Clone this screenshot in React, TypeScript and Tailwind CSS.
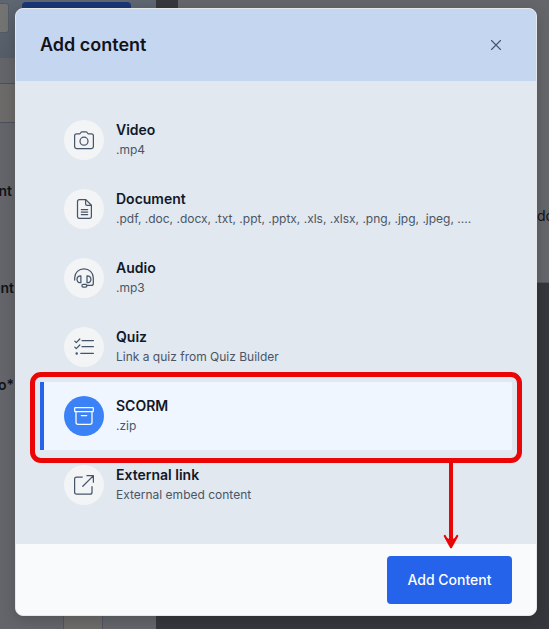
import type { ReactNode } from "react";

type ContentType = {
  title: string;
  description: string;
  icon: ReactNode;
};

const CONTENT_TYPES: ContentType[] = [
  {
    title: "Video",
    description: ".mp4",
    icon: (
      <>
        <path d="M2.600 3.800h3c.7 0 .8-.3 1-.9.2-.7.6-1.100 1.300-1.100h4.200c.7 0 1.100.4 1.300 1.100.2.6.3.9 1 .9h3c1.200 0 2 .8 2 2v10.800c0 1.200-.8 2-2 2H2.600c-1.200 0-2-.8-2-2V5.800c0-1.200.8-2 2-2Z" />
        <circle cx="10" cy="11.200" r="4" />
      </>
    ),
  },
  {
    title: "Document",
    description:
      ".pdf, .doc, .docx, .txt, .ppt, .pptx, .xls, .xlsx, .png, .jpg, .jpeg, ....",
    icon: (
      <>
        <path d="M5.500.6h6.300l5.600 5.600v11.200a2 2 0 0 1-2 2H5.500a2 2 0 0 1-2-2V2.600a2 2 0 0 1 2-2Z" />
        <path d="M11.600.8v4c0 1 .6 1.600 1.600 1.600h4M7.300 10.500h6.400M7.300 13h6.400M7.300 15.500h6.400" />
      </>
    ),
  },
  {
    title: "Audio",
    description: ".mp3",
    icon: (
      <>
        <path d="M.7 12V9.800C.7 4.600 4.800.9 10 .9s9.300 3.700 9.300 8.900v5.600c0 1.300-.7 2-1.900 2h-4.200" />
        <path d="M6.900 7.900v6.800c-2.400.2-3.900-1.100-3.900-3.400s1.500-3.600 3.900-3.400ZM13 7.900v6.800c2.400.2 3.900-1.100 3.900-3.400S15.400 7.700 13 7.900Z" />
        <rect x="7.900" y="16.300" width="5" height="2.700" rx="1.350" />
      </>
    ),
  },
  {
    title: "Quiz",
    description: "Link a quiz from Quiz Builder",
    icon: (
      <>
        <path d="m.8 4.100 1.500 1.500L5.800 2M.8 10.100l1.500 1.500L5.800 8M8 3.600h11.400M8 9.700h11.400M6.800 16.400h12.600" />
        <circle cx="2.700" cy="16.400" r=".6" fill="currentColor" />
      </>
    ),
  },
  {
    title: "SCORM",
    description: ".zip",
    icon: (
      <>
        <rect x=".7" y="1.500" width="18.600" height="4" rx=".6" />
        <path d="M2 5.500v10.800a2 2 0 0 0 2 2h12a2 2 0 0 0 2-2V5.500M7.300 9.500h5.400" />
      </>
    ),
  },
  {
    title: "External link",
    description: "External embed content",
    icon: (
      <>
        <path d="M8.300 2H2.600c-1.200 0-2 .8-2 2v13.200c0 1.200.8 2 2 2h13.400c1.200 0 2-.8 2-2v-5.500" />
        <path d="M12.900.7h6.500v6.500M19.200.9 8.800 11.300" />
      </>
    ),
  },
];

function PageBehind() {
  return (
    <div
      aria-hidden="true"
      className="flex h-full text-[14px] leading-5 font-semibold text-[#111318]"
    >
      <div className="flex h-full w-[156px] shrink-0 flex-col bg-[#64656a]">
        <div className="flex h-[58px] bg-linear-to-b from-[#5d6671] to-[#555d68]">
          <div className="mt-[3px] h-[30px] w-[9px] rounded-r-[3px] border border-l-0 border-[#555b63] bg-[#737373]" />
          <div className="mt-[2px] ml-[13px] h-10 w-[109px] rounded bg-[#1a3674]" />
        </div>
        <div className="mt-[25px] h-10 border-y border-[#4a515b] bg-[#6c6b6a]" />
        <div className="mt-[58px] flex w-3 justify-end whitespace-nowrap">ent</div>
        <div className="mt-[77px] flex w-[14px] justify-end whitespace-nowrap">ent</div>
        <div className="mt-[77px] flex w-[14px] justify-end whitespace-nowrap">o*</div>
        <div className="mt-auto flex h-[95px]">
          <div className="w-[63px]" />
          <div className="w-10 border-x border-[#50565f] bg-[#6c6b6a]" />
        </div>
      </div>
      <div className="w-[22px] shrink-0 bg-[#36373c]" />
      <div className="flex-1 bg-[#36373c]">
        <div className="flex h-[283px] justify-end overflow-hidden border-b border-[#4e565f] bg-[#65666a] pt-[206px]">
          <span className="w-3 font-normal whitespace-nowrap">do</span>
        </div>
      </div>
    </div>
  );
}

function ContentRow({ item, selected }: { item: ContentType; selected: boolean }) {
  return (
    <button
      type="button"
      className={`flex h-[68px] w-full items-center border-l-4 pl-5 text-left ${
        selected ? "border-[#2563eb] bg-[#eff6ff]" : "border-transparent"
      }`}
    >
      <span
        className={`flex size-10 shrink-0 items-center justify-center rounded-full ${
          selected ? "bg-[#3b82f6] text-white" : "bg-[#f3f4f6] text-[#475569]"
        }`}
      >
        <svg
          viewBox="0 0 20 20"
          className="size-5"
          fill="none"
          stroke="currentColor"
          strokeWidth="1.25"
          strokeLinecap="round"
          strokeLinejoin="round"
        >
          {item.icon}
        </svg>
      </span>
      <span className="ml-3 flex flex-col pb-0.5 whitespace-nowrap">
        <span className="text-[14px] leading-5 font-semibold text-[#111827]">{item.title}</span>
        <span className="mt-0.5 text-[12px] leading-4 text-[#4b5563]">{item.description}</span>
      </span>
    </button>
  );
}

export default function App() {
  return (
    <div className="relative h-[629px] w-[549px] overflow-hidden font-[Inter,sans-serif]">
      <PageBehind />

      <div className="absolute top-2 left-[15px] flex h-[608px] w-[522px] flex-col overflow-hidden rounded-lg border border-[#e5e7eb] bg-[#e1e8f0] shadow-[0_4px_14px_rgba(0,0,0,0.18)]">
        <header className="flex h-[72px] shrink-0 items-center justify-between bg-[#c5d6f0] pr-[34px] pl-6">
          <h2 className="text-[18px] leading-7 font-semibold text-[#111318]">Add content</h2>
          <button type="button" aria-label="Close" className="text-[#475569]">
            <svg
              viewBox="0 0 12 12"
              className="size-3"
              fill="none"
              stroke="currentColor"
              strokeWidth="1.1"
              strokeLinecap="round"
            >
              <path d="m1.500 1.500 9 9M10.500 1.500l-9 9" />
            </svg>
          </button>
        </header>

        <div className="flex flex-1 flex-col gap-px px-6 pt-[25px]">
          {CONTENT_TYPES.map((item) => (
            <ContentRow key={item.title} item={item} selected={item.title === "SCORM"} />
          ))}
        </div>

        <footer className="flex h-[71px] shrink-0 items-center justify-end bg-[#f9fafc] px-6">
          <button
            type="button"
            className="h-12 w-[125px] rounded bg-[#2563eb] text-[14px] font-medium text-white"
          >
            Add Content
          </button>
        </footer>
      </div>

      {/* callout around the selected row, pointing at the submit button */}
      <div className="pointer-events-none absolute top-[372px] left-[30px] h-[91px] w-[492px] rounded-[11px] border-5 border-[#ea0606]" />
      <svg
        viewBox="0 0 16 90"
        className="pointer-events-none absolute top-[460px] left-[443px] h-[90px] w-4"
        fill="none"
      >
        <path d="M8 0v83" stroke="#ea0606" strokeWidth="4" />
        <path
          d="M1.800 76 8 87.200 14.200 76"
          stroke="#ea0606"
          strokeWidth="2.200"
          strokeLinecap="round"
          strokeLinejoin="round"
        />
        <path d="m2.500 77 5.500 3 5.500-3L8 88Z" fill="#ea0606" />
      </svg>
    </div>
  );
}
